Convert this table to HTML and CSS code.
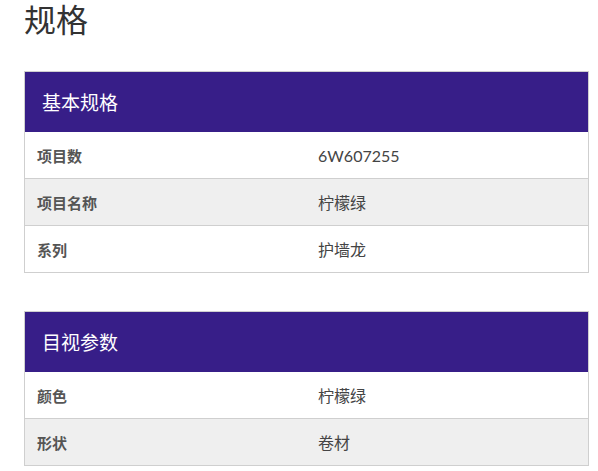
FILE: index.html
```html
<!DOCTYPE html>
<html lang="zh">
<head>
<meta charset="utf-8">
<link rel="stylesheet" href="styles.css">
</head>
<body>
<div class="page">
  <h1 class="title">规格</h1>
  <section class="spec">
    <div class="spec-head">基本规格</div>
    <div class="row"><div class="label">项目数</div><div class="value">6W607255</div></div>
    <div class="row alt"><div class="label">项目名称</div><div class="value">柠檬绿</div></div>
    <div class="row"><div class="label">系列</div><div class="value">护墙龙</div></div>
  </section>
  <section class="spec">
    <div class="spec-head">目视参数</div>
    <div class="row"><div class="label">颜色</div><div class="value">柠檬绿</div></div>
    <div class="row alt"><div class="label">形状</div><div class="value">卷材</div></div>
  </section>
</div>
</body>
</html>
```

FILE: styles.css
```css
html, body {
  margin: 0;
  padding: 0;
  background: #fff;
}
body {
  font-family: Lato, "Noto Sans CJK SC", sans-serif;
  color: #444;
}
.page {
  padding: 0 9px 0 24px;
  display: flex;
  flex-direction: column;
}
.title {
  margin: 0;
  font-size: 32px;
  font-weight: 400;
  line-height: 40px;
  color: #333;
  height: 71px;
}
.spec {
  border: 1px solid #cfcfcf;
  margin-bottom: 38px;
}
.spec:last-child {
  margin-bottom: 0;
}
.spec-head {
  background: #371e88;
  color: #fff;
  height: 59px;
  display: flex;
  align-items: center;
  padding: 0 0 2px 17px;
  box-sizing: border-box;
  height: 60px;
  font-size: 19px;
}
.row {
  display: grid;
  grid-template-columns: 280px 1fr;
  height: 46px;
  align-items: center;
  border-top: 1px solid #cfcfcf;
}
.spec-head + .row {
  border-top: 0;
  height: 46px;
}
.row.alt {
  background: #efefef;
}
.label {
  padding-left: 12px;
  font-size: 15px;
  font-weight: 700;
  color: #555;
}
.value {
  padding-left: 13px;
  font-size: 16px;
  color: #444;
}
```
